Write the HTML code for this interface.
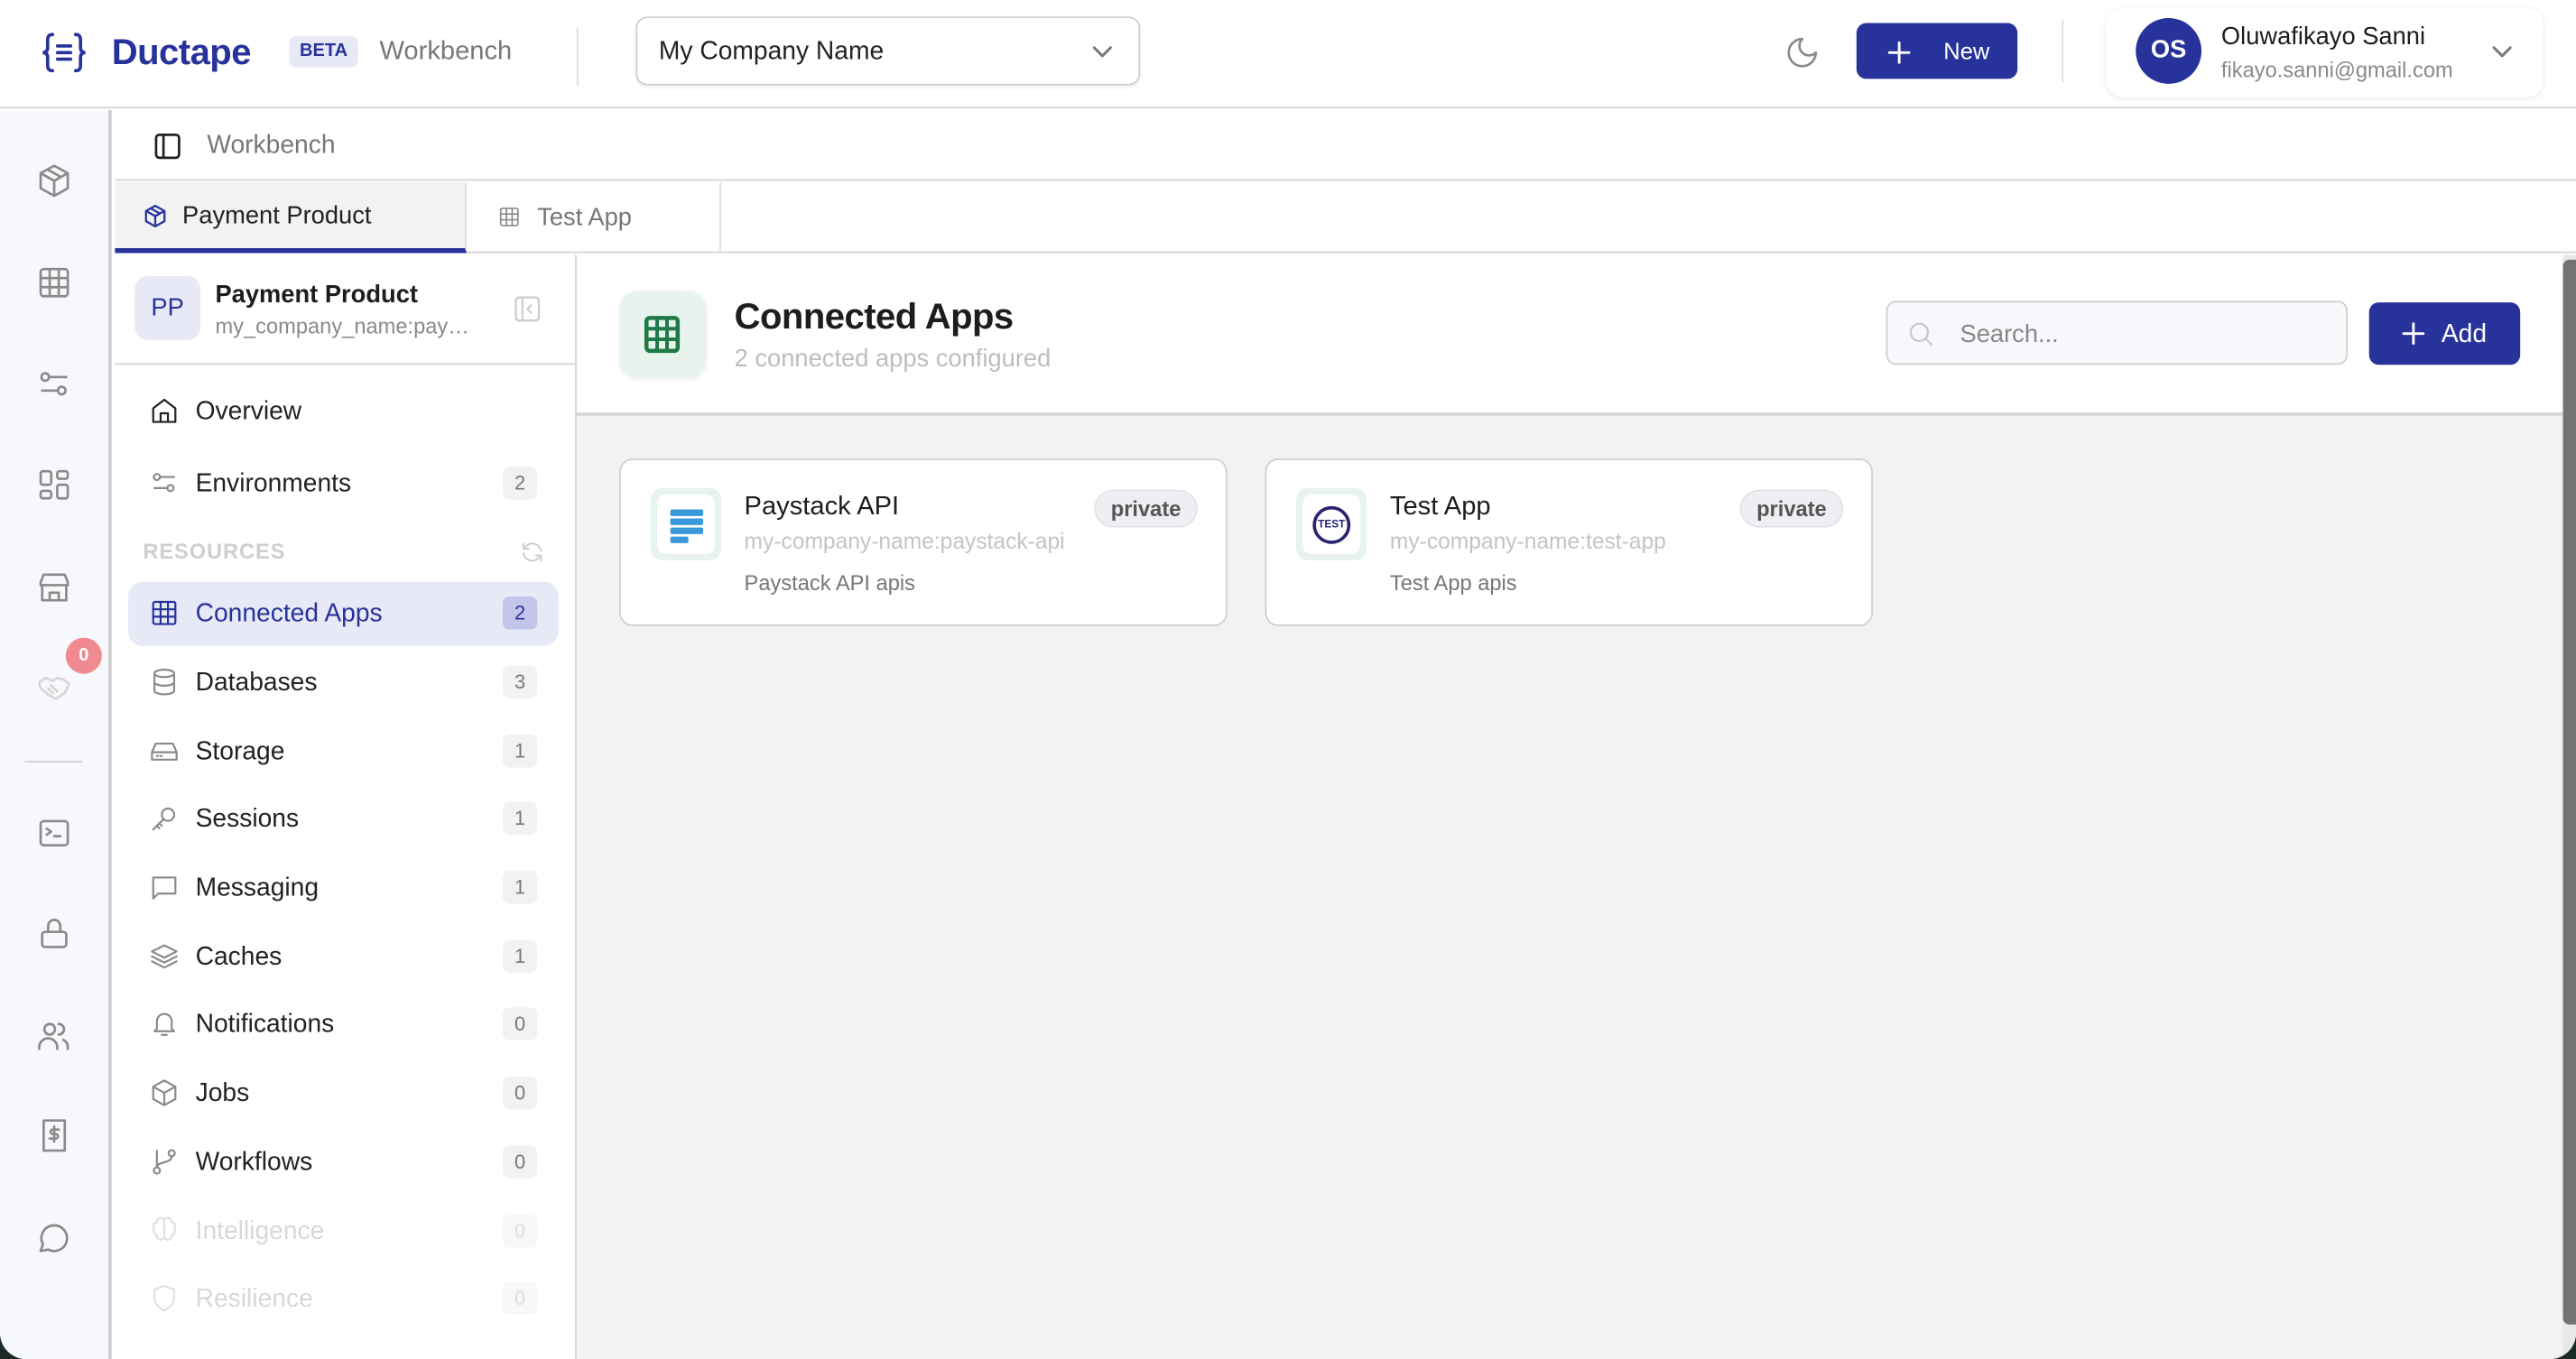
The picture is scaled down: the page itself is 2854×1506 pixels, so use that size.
<!DOCTYPE html>
<html><head><meta charset="utf-8">
<style>
*{box-sizing:border-box;margin:0;padding:0}
html,body{width:2854px;height:1506px;overflow:hidden;background:#1c2a25}
#w{position:absolute;left:0;top:0;width:1568px;height:827px;transform:scale(1.8202,1.8211);transform-origin:0 0;background:#fff;border-radius:0 0 16px 16px;overflow:hidden;font-family:"Liberation Sans",sans-serif;color:#1d1d1f}
.a{position:absolute}
svg{display:block}
.ic{fill:none;stroke:#8a8a8a;stroke-width:1.6;stroke-linecap:round;stroke-linejoin:round}
.nav{position:absolute;left:78px;width:262px;height:38px}
.nav .t{position:absolute;left:41px;top:11px;font-size:15.5px;color:#222}
.nav svg{position:absolute;left:13px;top:10px}
.nav .b{position:absolute;left:228px;top:9px;width:21px;height:20px;border-radius:4px;background:#f2f2f2;color:#777;font-size:12px;text-align:center;line-height:20px}
.rail svg{position:absolute;left:22px}
</style></head><body><div id="w">

<!-- top bar -->
<div class="a" style="left:0;top:0;width:1568px;height:66px;border-bottom:1.5px solid #d4d4d4"></div>
<svg class="a" style="left:24px;top:19px" width="30" height="26" viewBox="0 0 30 26"><path d="M8 2c-3 0-3 2-3 4v4c0 2-1 3-3 3 2 0 3 1 3 3v4c0 2 0 4 3 4M22 2c3 0 3 2 3 4v4c0 2 1 3 3 3-2 0-3 1-3 3v4c0 2 0 4-3 4M11 9h8M11 13h8M11 17h8" fill="none" stroke="#27339b" stroke-width="2" stroke-linecap="round"/></svg>
<div class="a" style="left:68px;top:19px;font-size:22px;font-weight:bold;color:#27339b;letter-spacing:-0.3px">Ductape</div>
<div class="a" style="left:176px;top:22px;width:42px;height:19px;background:#e8e9f6;border-radius:4px;color:#27339b;font-size:11px;font-weight:bold;text-align:center;line-height:19px">BETA</div>
<div class="a" style="left:231px;top:23px;font-size:16px;color:#777">Workbench</div>
<div class="a" style="left:351px;top:17px;width:1px;height:35px;background:#ddd"></div>
<div class="a" style="left:387px;top:10px;width:307px;height:42px;border:1.5px solid #d0d0d0;border-radius:7px;box-shadow:0 1px 2px rgba(0,0,0,.06)"></div>
<div class="a" style="left:401px;top:23px;font-size:15.5px;color:#222">My Company Name</div>
<svg class="a ic" style="left:664px;top:27px" width="14" height="10" viewBox="0 0 14 10"><path d="M2 2l5 5 5-5" style="stroke:#777"/></svg>
<svg class="a ic" style="left:1086px;top:21px" width="22" height="22" viewBox="0 0 24 24"><path d="M12 3a6 6 0 0 0 9 9 9 9 0 1 1-9-9z"/></svg>
<div class="a" style="left:1130px;top:14px;width:98px;height:34px;background:#27339b;border-radius:6px"></div>
<svg class="a" style="left:1148px;top:24px" width="16" height="16" viewBox="0 0 16 16"><path d="M8 2v12M2 8h12" stroke="#fff" stroke-width="1.6" stroke-linecap="round"/></svg>
<div class="a" style="left:1183px;top:23px;font-size:14px;color:#fff">New</div>
<div class="a" style="left:1255px;top:12px;width:1px;height:38px;background:#ddd"></div>
<div class="a" style="left:1282px;top:5px;width:266px;height:54px;border-radius:10px;box-shadow:0 1px 4px rgba(0,0,0,.08);background:#fff"></div>
<div class="a" style="left:1300px;top:11px;width:40px;height:40px;border-radius:50%;background:#27339b;color:#fff;font-weight:bold;font-size:15px;text-align:center;line-height:40px">OS</div>
<div class="a" style="left:1352px;top:14px;font-size:15px;color:#1d1d1f">Oluwafikayo Sanni</div>
<div class="a" style="left:1352px;top:35px;font-size:13px;color:#8a8a8a">fikayo.sanni@gmail.com</div>
<svg class="a ic" style="left:1516px;top:27px" width="14" height="10" viewBox="0 0 14 10"><path d="M2 2l5 5 5-5" style="stroke:#777"/></svg>

<!-- icon rail -->
<div class="a rail" style="left:0;top:67px;width:68px;height:760px;background:#f7f8fc;border-right:2px solid #cfcfcf">
<svg class="ic" style="top:32px" width="22" height="22" viewBox="0 0 24 24"><path d="M12 2l9 5v10l-9 5-9-5V7z M3 7l9 5 9-5 M12 12v10 M7.5 4.5l9 5"/></svg>
<svg class="ic" style="top:94px" width="22" height="22" viewBox="0 0 24 24"><rect x="3" y="3" width="18" height="18" rx="2"/><path d="M3 9h18M3 15h18M9 3v18M15 3v18"/></svg>
<svg class="ic" style="top:156px" width="22" height="22" viewBox="0 0 24 24"><circle cx="6" cy="7" r="2.5"/><circle cx="17" cy="16" r="2.5"/><path d="M9 7h11M4 16h10"/></svg>
<svg class="ic" style="top:217px" width="22" height="22" viewBox="0 0 24 24"><rect x="3" y="3" width="7" height="9" rx="1.5"/><rect x="14" y="3" width="7" height="5" rx="1.5"/><rect x="14" y="12" width="7" height="9" rx="1.5"/><rect x="3" y="16" width="7" height="5" rx="1.5"/></svg>
<svg class="ic" style="top:279px" width="22" height="22" viewBox="0 0 24 24"><path d="M3 9l2-5h14l2 5v2H3z M4 11v10h16V11 M9 21v-5h6v5"/></svg>
<svg class="ic" style="top:340px;stroke:#d6d6d6" width="22" height="22" viewBox="0 0 24 24"><path d="M2 9l4-3 5 2 3-2 4 1 4 3-3 6-6 4-5-3-5-4z M8 13l3 3M10 11l4 4"/></svg>
<div class="a" style="left:40px;top:321px;width:22px;height:22px;border-radius:50%;background:#ef8a90;color:#fff;font-size:11px;font-weight:bold;text-align:center;line-height:22px">0</div>
<div class="a" style="left:15px;top:396px;width:35px;height:1px;background:#cfcfcf"></div>
<svg class="ic" style="top:429px" width="22" height="22" viewBox="0 0 24 24"><rect x="3" y="4" width="18" height="16" rx="2"/><path d="M7 9l3 2-3 2M12 14h4"/></svg>
<svg class="ic" style="top:490px" width="22" height="22" viewBox="0 0 24 24"><rect x="4" y="11" width="16" height="10" rx="2"/><path d="M8 11V7a4 4 0 0 1 8 0v4"/></svg>
<svg class="ic" style="top:552px" width="22" height="22" viewBox="0 0 24 24"><circle cx="9" cy="8" r="3.5"/><path d="M2 21v-1a6 6 0 0 1 12 0v1M15 4.5a3.5 3.5 0 0 1 0 7M18 15a5 5 0 0 1 3 5v1"/></svg>
<svg class="ic" style="top:613px" width="22" height="22" viewBox="0 0 24 24"><path d="M5 2h14v20H5z M15 8h-4a1.5 1.5 0 0 0 0 3h2a1.5 1.5 0 0 1 0 3H9M12 6v10"/></svg>
<svg class="ic" style="top:675px" width="22" height="22" viewBox="0 0 24 24"><path d="M3 21l1.5-4.5A8.5 8.5 0 1 1 8 20z"/></svg>
</div>

<!-- breadcrumb -->
<div class="a" style="left:70px;top:66px;width:1498px;height:44px;border-bottom:1.5px solid #d4d4d4"></div>
<svg class="a" style="left:93px;top:80px" width="18" height="18" viewBox="0 0 18 18"><rect x="2" y="2" width="14" height="14" rx="2" fill="none" stroke="#222" stroke-width="1.5"/><path d="M6.5 2v14" stroke="#222" stroke-width="1.5"/></svg>
<div class="a" style="left:126px;top:80px;font-size:15.5px;color:#777">Workbench</div>

<!-- tabs -->
<div class="a" style="left:70px;top:111px;width:1498px;height:43px;border-bottom:1.5px solid #d4d4d4"></div>
<div class="a" style="left:70px;top:111px;width:214px;height:43px;background:#f2f2f2;border-right:1px solid #ddd;border-bottom:3px solid #27339b"></div>
<svg class="a" style="left:87px;top:124px" width="15" height="15" viewBox="0 0 24 24"><path d="M12 2l9 5v10l-9 5-9-5V7z M3 7l9 5 9-5 M12 12v10 M7.5 4.5l9 5" fill="none" stroke="#27339b" stroke-width="2" stroke-linejoin="round"/></svg>
<div class="a" style="left:111px;top:123px;font-size:15px;color:#222">Payment Product</div>
<div class="a" style="left:284px;top:111px;width:155px;height:43px;border-right:1px solid #ddd"></div>
<svg class="a ic" style="left:303px;top:125px" width="14" height="14" viewBox="0 0 24 24"><rect x="3" y="3" width="18" height="18" rx="2"/><path d="M3 9h18M3 15h18M9 3v18M15 3v18"/></svg>
<div class="a" style="left:327px;top:124px;font-size:15px;color:#777">Test App</div>

<!-- sub sidebar -->
<div class="a" style="left:70px;top:155px;width:281px;height:672px;border-right:1.5px solid #d4d4d4"></div>
<div class="a" style="left:70px;top:221px;width:280px;height:1px;background:#d4d4d4"></div>
<div class="a" style="left:82px;top:168px;width:40px;height:39px;border-radius:8px;background:#e8e9f6;color:#27339b;font-size:15px;text-align:center;line-height:39px">PP</div>
<div class="a" style="left:131px;top:171px;font-size:15px;font-weight:bold;color:#1d1d1f">Payment Product</div>
<div class="a" style="left:131px;top:191px;font-size:13px;color:#8a8a8a">my_company_name:pay…</div>
<svg class="a" style="left:313px;top:180px" width="16" height="16" viewBox="0 0 16 16"><rect x="1" y="1" width="14" height="14" rx="2" fill="none" stroke="#ccc" stroke-width="1.2"/><path d="M5 1v14M10.5 5.5L8 8l2.5 2.5" fill="none" stroke="#ccc" stroke-width="1.2"/></svg>

<div class="nav" style="top:231px"><svg class="ic" style="stroke:#222" width="18" height="18" viewBox="0 0 24 24"><path d="M3 10l9-7 9 7v11H3z M9 21v-7h6v7"/></svg><span class="t">Overview</span></div>
<div class="nav" style="top:275px"><svg class="ic" width="18" height="18" viewBox="0 0 24 24"><circle cx="6" cy="7" r="2.5"/><circle cx="17" cy="16" r="2.5"/><path d="M9 7h11M4 16h10"/></svg><span class="t">Environments</span><span class="b">2</span></div>
<div class="a" style="left:87px;top:328px;font-size:13px;font-weight:bold;color:#cfcfcf;letter-spacing:.5px">RESOURCES</div>
<svg class="a ic" style="left:316px;top:328px;stroke:#ccc" width="16" height="16" viewBox="0 0 24 24"><path d="M20 11a8 8 0 0 0-14-4l-2 2M4 13a8 8 0 0 0 14 4l2-2M4 4v5h5M20 20v-5h-5"/></svg>
<div class="nav" style="top:354px;height:39px;background:#e8e9f6;border-radius:9px"><svg class="ic" style="stroke:#27339b" width="18" height="18" viewBox="0 0 24 24"><rect x="3" y="3" width="18" height="18" rx="1.5"/><path d="M3 9h18M3 15h18M9 3v18M15 3v18"/></svg><span class="t" style="color:#27339b">Connected Apps</span><span class="b" style="background:#c2c6e8;color:#27339b">2</span></div>
<div class="nav" style="top:396px"><svg class="ic" width="18" height="18" viewBox="0 0 24 24"><ellipse cx="12" cy="5" rx="8" ry="3"/><path d="M4 5v14c0 1.7 3.6 3 8 3s8-1.3 8-3V5M4 12c0 1.7 3.6 3 8 3s8-1.3 8-3"/></svg><span class="t">Databases</span><span class="b">3</span></div>
<div class="nav" style="top:438px"><svg class="ic" width="18" height="18" viewBox="0 0 24 24"><path d="M2 13l3-7h14l3 7v6H2z M2 13h20M6 16h1M9 16h1"/></svg><span class="t">Storage</span><span class="b">1</span></div>
<div class="nav" style="top:479px"><svg class="ic" width="18" height="18" viewBox="0 0 24 24"><circle cx="15" cy="9" r="5"/><path d="M11.5 12.5L3 21M6 18l2 2M8 16l2 2"/></svg><span class="t">Sessions</span><span class="b">1</span></div>
<div class="nav" style="top:521px"><svg class="ic" width="18" height="18" viewBox="0 0 24 24"><path d="M3 4h18v13H7l-4 4z"/></svg><span class="t">Messaging</span><span class="b">1</span></div>
<div class="nav" style="top:563px"><svg class="ic" width="18" height="18" viewBox="0 0 24 24"><path d="M12 3l10 5-10 5L2 8z M2 12l10 5 10-5 M2 16l10 5 10-5"/></svg><span class="t">Caches</span><span class="b">1</span></div>
<div class="nav" style="top:604px"><svg class="ic" width="18" height="18" viewBox="0 0 24 24"><path d="M6 10a6 6 0 0 1 12 0v6l2 2H4l2-2z M10 21h4"/></svg><span class="t">Notifications</span><span class="b">0</span></div>
<div class="nav" style="top:646px"><svg class="ic" width="18" height="18" viewBox="0 0 24 24"><path d="M12 2l9 5v10l-9 5-9-5V7z M3 7l9 5 9-5 M12 12v10"/></svg><span class="t">Jobs</span><span class="b">0</span></div>
<div class="nav" style="top:688px"><svg class="ic" width="18" height="18" viewBox="0 0 24 24"><circle cx="6" cy="19" r="2.5"/><circle cx="18" cy="5" r="2.5"/><path d="M6 3v13.5M18 7.5c0 6-12 4-12 9"/></svg><span class="t">Workflows</span><span class="b">0</span></div>
<div class="nav" style="top:730px"><svg class="ic" style="stroke:#e0e0e0" width="18" height="18" viewBox="0 0 24 24"><path d="M12 4a3 3 0 0 0-6 1 3 3 0 0 0-2 5 3 3 0 0 0 2 5 3 3 0 0 0 6 2V4a3 3 0 0 1 6 1 3 3 0 0 1 2 5 3 3 0 0 1-2 5 3 3 0 0 1-6 2"/></svg><span class="t" style="color:#d8d8d8">Intelligence</span><span class="b" style="background:#f8f8f8;color:#ddd">0</span></div>
<div class="nav" style="top:771px"><svg class="ic" style="stroke:#e0e0e0" width="18" height="18" viewBox="0 0 24 24"><path d="M12 2l8 3v7c0 5-4 8-8 10-4-2-8-5-8-10V5z"/></svg><span class="t" style="color:#d8d8d8">Resilience</span><span class="b" style="background:#f8f8f8;color:#ddd">0</span></div>

<!-- main -->
<div class="a" style="left:351px;top:252px;width:1217px;height:575px;background:#f2f2f2"></div>
<div class="a" style="left:351px;top:251px;width:1217px;height:1.5px;background:#d4d4d4"></div>
<div class="a" style="left:377px;top:177px;width:53px;height:53px;border-radius:11px;background:#e8f3ee;box-shadow:0 1px 3px rgba(0,0,0,.06)"></div>
<svg class="a" style="left:392px;top:192px" width="22" height="23" viewBox="0 0 22 23"><rect x="1.5" y="1.5" width="19" height="20" rx="2" fill="none" stroke="#1f7a48" stroke-width="2.5"/><path d="M1.5 8h19M1.5 14.5h19M8 1.5v20M14 1.5v20" stroke="#1f7a48" stroke-width="2.2"/></svg>
<div class="a" style="left:447px;top:180px;font-size:22px;font-weight:bold;color:#1d1d1f;letter-spacing:-0.3px">Connected Apps</div>
<div class="a" style="left:447px;top:210px;font-size:15px;color:#bdbdbd">2 connected apps configured</div>
<div class="a" style="left:1148px;top:183px;width:281px;height:39px;background:#f7f8fc;border:1.5px solid #d0d0d0;border-radius:6px"></div>
<svg class="a ic" style="left:1160px;top:194px;stroke:#c8c8c8" width="18" height="18" viewBox="0 0 24 24"><circle cx="11" cy="11" r="7"/><path d="M16 16l5 5"/></svg>
<div class="a" style="left:1193px;top:195px;font-size:15px;color:#888">Search...</div>
<div class="a" style="left:1442px;top:184px;width:92px;height:38px;background:#27339b;border-radius:6px"></div>
<svg class="a" style="left:1461px;top:195px" width="16" height="16" viewBox="0 0 16 16"><path d="M8 2v12M2 8h12" stroke="#fff" stroke-width="1.6" stroke-linecap="round"/></svg>
<div class="a" style="left:1486px;top:195px;font-size:15.5px;color:#fff">Add</div>

<!-- cards -->
<div class="a" style="left:377px;top:279px;width:370px;height:102px;background:#fff;border:1.5px solid #cfcfcf;border-radius:8px"></div>
<div class="a" style="left:396px;top:297px;width:43px;height:44px;border-radius:7px;background:#e8f3ee"></div>
<div class="a" style="left:400px;top:301px;width:35px;height:36px;border-radius:5px;background:#fff"></div>
<svg class="a" style="left:407px;top:309px" width="22" height="22" viewBox="0 0 22 22"><rect x="1" y="1" width="20" height="4" rx="1" fill="#3a9ad9"/><rect x="1" y="6.5" width="20" height="4" rx="1" fill="#3a9ad9"/><rect x="1" y="12" width="20" height="4" rx="1" fill="#3a9ad9"/><rect x="1" y="17.5" width="11" height="4" rx="1" fill="#3a9ad9"/></svg>
<div class="a" style="left:453px;top:300px;font-size:16px;color:#1d1d1f">Paystack API</div>
<div class="a" style="left:453px;top:322px;font-size:13.5px;color:#c4c4c4">my-company-name:paystack-api</div>
<div class="a" style="left:453px;top:347px;font-size:13px;color:#777">Paystack API apis</div>
<div class="a" style="left:666px;top:298px;width:63px;height:23px;border-radius:12px;background:#efeff3;border:1px solid #e2e2e8;font-size:13px;font-weight:bold;color:#555;text-align:center;line-height:21px">private</div>

<div class="a" style="left:770px;top:279px;width:370px;height:102px;background:#fff;border:1.5px solid #cfcfcf;border-radius:8px"></div>
<div class="a" style="left:789px;top:297px;width:43px;height:44px;border-radius:7px;background:#e8f3ee"></div>
<div class="a" style="left:793px;top:301px;width:35px;height:36px;border-radius:5px;background:#fff"></div>
<div class="a" style="left:799px;top:308px;width:23px;height:23px;border-radius:50%;border:2px solid #2a2470;font-size:6.5px;font-weight:bold;color:#2a2470;text-align:center;line-height:19px">TEST</div>
<div class="a" style="left:846px;top:300px;font-size:16px;color:#1d1d1f">Test App</div>
<div class="a" style="left:846px;top:322px;font-size:13.5px;color:#c4c4c4">my-company-name:test-app</div>
<div class="a" style="left:846px;top:347px;font-size:13px;color:#777">Test App apis</div>
<div class="a" style="left:1059px;top:298px;width:63px;height:23px;border-radius:12px;background:#efeff3;border:1px solid #e2e2e8;font-size:13px;font-weight:bold;color:#555;text-align:center;line-height:21px">private</div>

<!-- scrollbar -->
<div class="a" style="left:1560px;top:155px;width:8px;height:672px;background:#e8e8e8"></div>
<div class="a" style="left:1560px;top:158px;width:8px;height:648px;background:#737373;border-radius:4px 0 0 4px"></div>
</div></body></html>
